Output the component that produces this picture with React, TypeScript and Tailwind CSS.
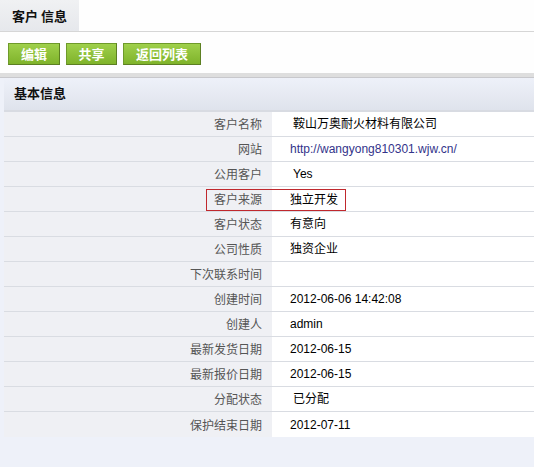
const rows: { label: string; value: string; link?: boolean; pad?: boolean; mark?: boolean }[] = [
  { label: "客户名称", value: "鞍山万奥耐火材料有限公司", pad: true },
  { label: "网站", value: "http://wangyong810301.wjw.cn/", link: true },
  { label: "公用客户", value: "Yes", pad: true },
  { label: "客户来源", value: "独立开发", mark: true },
  { label: "客户状态", value: "有意向" },
  { label: "公司性质", value: "独资企业" },
  { label: "下次联系时间", value: "" },
  { label: "创建时间", value: "2012-06-06 14:42:08" },
  { label: "创建人", value: "admin" },
  { label: "最新发货日期", value: "2012-06-15" },
  { label: "最新报价日期", value: "2012-06-15" },
  { label: "分配状态", value: "已分配", pad: true },
  { label: "保护结束日期", value: "2012-07-11" },
];

const font = { fontFamily: '"Noto Sans CJK SC", "Liberation Sans", sans-serif' };

function GreenButton({ children, w }: { children: string; w: string }) {
  return (
    <button
      className={`${w} h-[22px] flex items-center justify-center text-[13px] font-bold text-white bg-gradient-to-b from-[#9fd04a] to-[#7fb32a] border border-[#6e9a2a] border-b-[#5c7f22] border-r-[#5c7f22]`}
    >
      {children}
    </button>
  );
}

export default function App() {
  return (
    <div className="w-[534px] h-[467px] bg-[#eef1f9] text-[12px] overflow-hidden" style={font}>
      {/* Tab bar */}
      <div className="h-[32px] bg-[#fefefe] border-b border-[#d6d6d6] flex">
        <div className="w-[79px] h-full bg-gradient-to-b from-[#f0f1f3] to-[#e6e8ec] flex items-center pl-[12px] font-bold text-[13px] text-[#111]">
          客户 信息
        </div>
      </div>

      {/* Toolbar */}
      <div className="h-[41px] bg-[#fefefe] flex items-center gap-[6px] pl-[8px] pt-[3px]">
        <GreenButton w="w-[52px]">编辑</GreenButton>
        <GreenButton w="w-[51px]">共享</GreenButton>
        <GreenButton w="w-[78px]">返回列表</GreenButton>
      </div>

      {/* Section header */}
      <div className="h-[5px] bg-[#dedede] border-b border-[#c8c8cc]" />
      <div className="h-[34px] ml-[4px] bg-gradient-to-b from-[#eef1f9] to-[#dfe3ec] border-b-[2px] border-[#d8dbe2] flex items-center pl-[10px] pb-[3px] font-bold text-[13px] text-[#111]">
        基本信息
      </div>

      {/* Detail table */}
      <div className="ml-[4px]">
        {rows.map((r) => (
          <div key={r.label} className="flex h-[25px] border-b border-[#d9dce2] last:border-b-0">
            <div className="w-[268px] bg-[#eff0f4] flex items-center justify-end pr-[10px] text-[#555]">
              {r.label}
            </div>
            <div className="flex-1 bg-white flex items-center pl-[18px]">
              {r.mark ? (
                <span className="relative text-black">
                  {r.value}
                  <span className="absolute left-[-84px] top-[-1px] w-[140px] h-[22px] border border-[#c0282d]" />
                </span>
              ) : (
                <span
                  className={`${r.pad ? "pl-[3px]" : ""} ${r.link ? "text-[#33338a]" : "text-black"}`}
                  style={{ fontFamily: '"Liberation Sans", "Noto Sans CJK SC", sans-serif' }}
                >
                  {r.value}
                </span>
              )}
            </div>
          </div>
        ))}
      </div>
    </div>
  );
}
